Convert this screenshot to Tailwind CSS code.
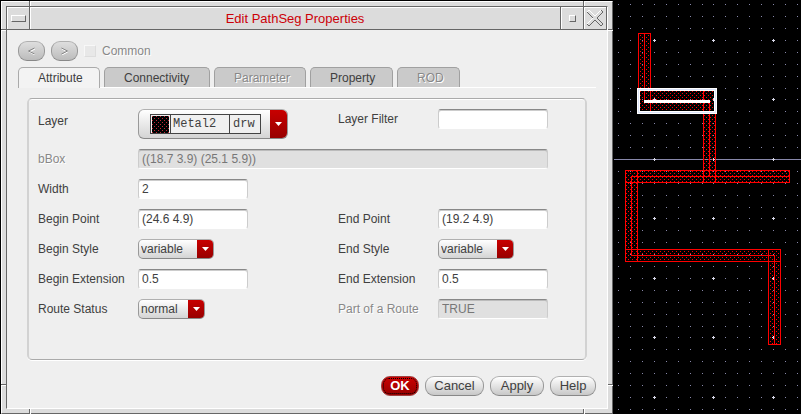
<!DOCTYPE html>
<html lang="en">
<head>
<meta charset="utf-8">
<title>Edit PathSeg Properties</title>
<script src="https://cdn.jsdelivr.net/npm/@tailwindcss/browser@4"></script>
</head>
<body class="bg-black font-['Liberation_Sans',Arial,sans-serif] text-[12px] leading-[16px] text-[#404040]">
<main class="grid min-h-screen grid-cols-[613fr_188fr]">

  <section aria-labelledby="dlg-title" class="relative flex flex-col border-l border-t border-black">
    <div class="flex flex-1 flex-col border border-b-[#666] border-l-white border-r-[#666] border-t-white bg-[#dcdcdc] p-1">
      <div class="flex flex-1 flex-col border border-b-white border-l-[#666] border-r-white border-t-[#666] bg-[#efefef]">

        <header class="flex h-[23px] border-b border-[#666] bg-[#dcdcdc]">
          <button type="button" aria-label="Window menu" class="flex w-[23px] items-center justify-center border-r border-[#666] shadow-[inset_1px_1px_0_#fff]">
            <span class="h-[7px] w-[15px] border border-b-[#666] border-l-white border-r-[#666] border-t-white"></span>
          </button>
          <h1 id="dlg-title" class="flex-1 border-r border-[#666] text-center text-[13px] leading-[24px] text-[#cc0008] shadow-[inset_1px_1px_0_#fff]">Edit PathSeg Properties</h1>
          <button type="button" aria-label="Maximize" class="flex w-[23px] items-center justify-center border-r border-[#666] shadow-[inset_1px_1px_0_#fff]">
            <span class="size-[7px] border border-b-[#666] border-l-white border-r-[#666] border-t-white"></span>
          </button>
          <button type="button" aria-label="Close" class="flex w-[23px] items-center justify-center border-r border-[#666] shadow-[inset_1px_1px_0_#fff]">
            <svg class="size-[18px]" viewBox="0 0 18 18">
              <path d="M3 1L9 7L15 1L17 3L11 9L17 15L15 17L9 11L3 17L1 15L7 9L1 3Z" fill="#dcdcdc"/>
              <g fill="none" stroke-width="1">
                <path d="M1 3L3 1L9 7L15 1M7 9L1 15" stroke="#fff"/>
                <path d="M15 1L17 3L11 9L17 15L15 17L9 11L3 17L1 15M7 9L1 3" stroke="#666"/>
              </g>
            </svg>
          </button>
        </header>

        <form class="flex flex-1 flex-col pb-3 pl-[11px] pr-[11px] pt-[11px]" onsubmit="return false">
          <div class="flex items-center gap-[6px] text-[#888]">
            <button type="button" disabled aria-label="Previous" class="flex h-5 w-[27px] items-center justify-center rounded-[9px] border border-b-[#888] border-l-[#999] border-r-[#999] border-t-[#b0b0b0] bg-linear-to-b from-[#dedede] to-[#bcbcbc]">
              <svg class="h-2 w-[9px]" viewBox="0 0 9 8" fill="none"><path d="M8 2L2.500 5L8 8" stroke="#fff"/><path d="M7.500 1L1.500 4L7.500 7" stroke="#888"/></svg>
            </button>
            <button type="button" disabled aria-label="Next" class="flex h-5 w-[27px] items-center justify-center rounded-[9px] border border-b-[#888] border-l-[#999] border-r-[#999] border-t-[#b0b0b0] bg-linear-to-b from-[#dedede] to-[#bcbcbc]">
              <svg class="h-2 w-[9px]" viewBox="0 0 9 8" fill="none"><path d="M2 2L7.500 5L2 8" stroke="#fff"/><path d="M1.500 1L7.500 4L1.500 7" stroke="#888"/></svg>
            </button>
            <label class="flex items-center gap-[6px] [text-shadow:1px_1px_0_#fff]">
              <input type="checkbox" disabled class="size-[12px] appearance-none border border-b-[#ddd] border-l-[#f8f8f8] border-r-[#ddd] border-t-[#f8f8f8] bg-[#e8e8e8]">Common
            </label>
          </div>

          <div role="tablist" class="mt-[6px] flex gap-1 border-b border-white">
            <button type="button" role="tab" aria-selected="true" class="-mb-px h-[21px] w-[82px] rounded-t-[5px] border border-b-0 border-[#aaa] bg-[#f3f3f3] pl-[19px] text-left">Attribute</button>
            <button type="button" role="tab" class="h-5 w-[106px] rounded-t-[5px] border border-b-0 border-[#a0a0a0] bg-[#cacaca] pl-[19px] text-left">Connectivity</button>
            <button type="button" role="tab" disabled class="h-5 w-[92px] rounded-t-[5px] border border-b-0 border-[#a0a0a0] bg-[#cacaca] pl-[19px] text-left text-[#888] [text-shadow:1px_1px_0_#fff]">Parameter</button>
            <button type="button" role="tab" class="h-5 w-[83px] rounded-t-[5px] border border-b-0 border-[#a0a0a0] bg-[#cacaca] pl-[19px] text-left">Property</button>
            <button type="button" role="tab" disabled class="h-5 w-[63px] rounded-t-[5px] border border-b-0 border-[#a0a0a0] bg-[#cacaca] pl-[19px] text-left text-[#888] [text-shadow:1px_1px_0_#fff]">ROD</button>
          </div>

          <div role="tabpanel" class="mx-[9px] mt-[10px] flex-1 rounded-[5px] border-x-2 border-y border-x-[#d2d2d2] border-y-[#aaa] pl-[9px] pr-[37px] pt-[10px] shadow-[0_1px_0_#fff,inset_0_1px_0_#fff]">
            <div class="grid grid-cols-[10fr_20fr_10fr_11fr] gap-y-[10px]">
              <label for="layer" class="pt-1">Layer</label>
              <div class="flex h-[30px] w-3/4 items-stretch overflow-hidden rounded-[6px] border border-b-[#888] border-l-[#999] border-r-[#999] border-t-[#b0b0b0] bg-linear-to-b from-white to-[#d4d4d4] pl-[11px]">
                <div class="my-1 flex flex-1 border border-[#444] bg-[#f0f0f0] font-['Liberation_Mono','Courier_New',monospace]">
                  <svg class="w-[20px] border-r border-[#444]" shape-rendering="crispEdges" aria-hidden="true"><rect x="1" y="1" width="17" height="17" fill="#000"/><rect x="1" y="1" width="17" height="17" fill="url(#swatch)"/></svg>
                  <select id="layer" class="min-w-0 flex-1 appearance-none pl-[2px]"><option>Metal2</option></select>
                  <span class="w-[31px] border-l border-[#444] pl-[3px] leading-[19px]">drw</span>
                </div>
                <span class="ml-[9px] flex w-[17px] items-center justify-center bg-linear-to-b from-[#c80000] to-[#980000]"><svg class="h-1 w-[7px]" viewBox="0 0 7 4"><path d="M0 0H7L3.500 4Z" fill="#fff"/></svg></span>
              </div>
              <label for="filter" class="pt-[2px]">Layer Filter</label>
              <input id="filter" class="h-5 w-full min-w-0 rounded-[3px] border border-b-white border-l-[#ccc] border-r-[#ccc] border-t-[#888] bg-white px-[3px] shadow-[inset_0_1px_0_#ccc]">

              <label for="bbox" class="pt-[2px] text-[#888] [text-shadow:1px_1px_0_#fff]">bBox</label>
              <input id="bbox" disabled value="((18.7 3.9) (25.1 5.9))" class="col-span-3 h-5 w-full min-w-0 rounded-[3px] border border-b-white border-l-[#ccc] border-r-[#ccc] border-t-[#888] bg-[#e0e0e0] px-[3px] text-[#777] shadow-[inset_0_1px_0_#bbb]">

              <label for="width" class="pt-[2px]">Width</label>
              <input id="width" value="2" class="col-span-3 h-5 w-[110px] min-w-0 rounded-[3px] border border-b-white border-l-[#ccc] border-r-[#ccc] border-t-[#888] bg-white px-[3px] shadow-[inset_0_1px_0_#ccc]">

              <label for="bp" class="pt-[2px]">Begin Point</label>
              <input id="bp" value="(24.6 4.9)" class="h-5 w-[55%] min-w-0 rounded-[3px] border border-b-white border-l-[#ccc] border-r-[#ccc] border-t-[#888] bg-white px-[3px] shadow-[inset_0_1px_0_#ccc]">
              <label for="ep" class="pt-[2px]">End Point</label>
              <input id="ep" value="(19.2 4.9)" class="h-5 w-full min-w-0 rounded-[3px] border border-b-white border-l-[#ccc] border-r-[#ccc] border-t-[#888] bg-white px-[3px] shadow-[inset_0_1px_0_#ccc]">

              <label for="bs" class="pt-[2px]">Begin Style</label>
              <div class="flex h-5 w-[76px] overflow-hidden rounded-[5px] border border-b-[#888] border-l-[#999] border-r-[#999] border-t-[#b0b0b0] bg-linear-to-b from-white to-[#d4d4d4]">
                <select id="bs" class="min-w-0 flex-1 appearance-none pl-[2px]"><option>variable</option></select>
                <span class="flex w-4 items-center justify-center bg-linear-to-b from-[#c80000] to-[#980000]"><svg class="h-1 w-[7px]" viewBox="0 0 7 4"><path d="M0 0H7L3.500 4Z" fill="#fff"/></svg></span>
              </div>
              <label for="es" class="pt-[2px]">End Style</label>
              <div class="flex h-5 w-[76px] overflow-hidden rounded-[5px] border border-b-[#888] border-l-[#999] border-r-[#999] border-t-[#b0b0b0] bg-linear-to-b from-white to-[#d4d4d4]">
                <select id="es" class="min-w-0 flex-1 appearance-none pl-[2px]"><option>variable</option></select>
                <span class="flex w-4 items-center justify-center bg-linear-to-b from-[#c80000] to-[#980000]"><svg class="h-1 w-[7px]" viewBox="0 0 7 4"><path d="M0 0H7L3.500 4Z" fill="#fff"/></svg></span>
              </div>

              <label for="be" class="pt-[2px]">Begin Extension</label>
              <input id="be" value="0.5" class="h-5 w-[55%] min-w-0 rounded-[3px] border border-b-white border-l-[#ccc] border-r-[#ccc] border-t-[#888] bg-white px-[3px] shadow-[inset_0_1px_0_#ccc]">
              <label for="ee" class="pt-[2px]">End Extension</label>
              <input id="ee" value="0.5" class="h-5 w-full min-w-0 rounded-[3px] border border-b-white border-l-[#ccc] border-r-[#ccc] border-t-[#888] bg-white px-[3px] shadow-[inset_0_1px_0_#ccc]">

              <label for="rs" class="pt-[2px]">Route Status</label>
              <div class="flex h-5 w-[67px] overflow-hidden rounded-[5px] border border-b-[#888] border-l-[#999] border-r-[#999] border-t-[#b0b0b0] bg-linear-to-b from-white to-[#d4d4d4]">
                <select id="rs" class="min-w-0 flex-1 appearance-none pl-[2px]"><option>normal</option></select>
                <span class="flex w-4 items-center justify-center bg-linear-to-b from-[#c80000] to-[#980000]"><svg class="h-1 w-[7px]" viewBox="0 0 7 4"><path d="M0 0H7L3.500 4Z" fill="#fff"/></svg></span>
              </div>
              <label for="pr" class="pt-[2px] text-[#888] [text-shadow:1px_1px_0_#fff]">Part of a Route</label>
              <input id="pr" disabled value="TRUE" class="h-5 w-full min-w-0 rounded-[3px] border border-b-white border-l-[#ccc] border-r-[#ccc] border-t-[#888] bg-[#e0e0e0] px-[3px] text-[#777] shadow-[inset_0_1px_0_#bbb]">
            </div>
          </div>

          <div class="mt-4 flex justify-end gap-[6px] text-[13px] leading-[18px]">
            <button type="submit" class="h-5 w-[38px] rounded-[9px] border border-[#a04040] bg-linear-to-b from-[#cc0000] to-[#960000] p-px font-bold leading-[14px] text-white"><span class="block rounded-[6px] border border-dotted border-black">OK</span></button>
            <button type="button" class="h-5 w-[59px] rounded-[9px] border border-b-[#888] border-l-[#999] border-r-[#999] border-t-[#b0b0b0] bg-linear-to-b from-white to-[#c8c8c8]">Cancel</button>
            <button type="button" class="h-5 w-[54px] rounded-[9px] border border-b-[#888] border-l-[#999] border-r-[#999] border-t-[#b0b0b0] bg-linear-to-b from-white to-[#c8c8c8]">Apply</button>
            <button type="button" class="h-5 w-[46px] rounded-[9px] border border-b-[#888] border-l-[#999] border-r-[#999] border-t-[#b0b0b0] bg-linear-to-b from-white to-[#c8c8c8]">Help</button>
          </div>
        </form>
      </div>
    </div>
    <!-- resize handle notches in the window frame -->
    <span class="absolute left-0 top-[28px] h-[2px] w-[5px] border-b border-white bg-[#666]"></span>
    <span class="absolute right-0 top-[28px] h-[2px] w-[5px] border-b border-white bg-[#666]"></span>
    <span class="absolute bottom-[28px] left-0 h-[2px] w-[5px] border-b border-white bg-[#666]"></span>
    <span class="absolute bottom-[28px] right-0 h-[2px] w-[5px] border-b border-white bg-[#666]"></span>
    <span class="absolute left-[28px] top-0 h-[5px] w-[2px] border-r border-white bg-[#666]"></span>
    <span class="absolute right-[28px] top-0 h-[5px] w-[2px] border-r border-white bg-[#666]"></span>
    <span class="absolute bottom-0 left-[28px] h-[5px] w-[2px] border-r border-white bg-[#666]"></span>
    <span class="absolute bottom-0 right-[28px] h-[5px] w-[2px] border-r border-white bg-[#666]"></span>
  </section>

  <section aria-label="Layout canvas" class="relative overflow-hidden bg-black">
    <svg class="absolute inset-0 size-full" shape-rendering="crispEdges">
      <defs>
        <pattern id="stipple" width="4" height="4" patternUnits="userSpaceOnUse">
          <path d="M1 1h1v1h-1zM3 3h1v1h-1z" fill="#f00"/>
        </pattern>
        <pattern id="swatch" width="4" height="4" patternUnits="userSpaceOnUse">
          <path d="M1 1h1v1h-1zM3 3h1v1h-1z" fill="#c02838"/>
        </pattern>
      </defs>
      <g id="grid" fill="#8888aa"></g>
      <path d="M1 159.500H2000" stroke="#8888aa"/>
      <g id="marks" fill="#d8d8e8"></g>
      <g fill="url(#stipple)">
        <path d="M25 33H38V91H25zM27 91H101V111H27zM90 111H103V170H90zM12 170H177V183H12zM12 183H25V249H12zM12 249H168V262H12zM155 262H168V345H155z"/>
      </g>
      <g fill="none" stroke="#f00">
        <path d="M25.500 112V33.500H37.500V112M31.500 33V101"/>
        <path d="M90.500 90V182.500M96.500 101V176.500M102.500 112V182.500"/>
        <path d="M12.500 170.500H176.500V182.500H12.500zM176 176.500H18.500V255.500H161.500V344"/>
        <path d="M12.500 170V261.500H167.500M24.500 170V261M12 249.500H167.500V344.500H155.500V249"/>
      </g>
      <path d="M31 101.500H97" stroke="#fff" stroke-width="3"/>
      <rect x="25.500" y="89.500" width="77" height="23" fill="none" stroke="#fff" stroke-width="3"/>
      <rect x="25.500" y="89.500" width="77" height="23" fill="none" stroke="#dce4fa"/>
    </svg>
  </section>
</main>
<script>
  // The grid step is slightly under 12 px: every fifth step lands on a major mark.
  const NS = 'http://www.w3.org/2000/svg';
  const step = 11.9;
  let dots = '', marks = '';
  for (let i = -3; i < 14; i++) {
    for (let j = -3; j < 32; j++) {
      const x = 41 + Math.floor(i * step + 0.4), y = 40 + Math.floor(j * step + 0.4);
      dots += `M${x} ${y}h1v1h-1z`;
      if (i % 5 === 0 && j % 5 === 0) marks += `M${x - 1} ${y}h3v1h-3zM${x} ${y - 1}h1v3h-1z`;
    }
  }
  for (const [id, d] of [['grid', dots], ['marks', marks]]) {
    const p = document.createElementNS(NS, 'path');
    p.setAttribute('d', d);
    document.getElementById(id).append(p);
  }
</script>
</body>
</html>
